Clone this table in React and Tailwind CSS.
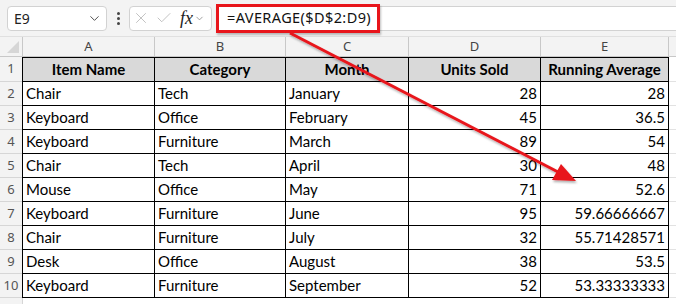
import { ChevronDown, X, Check } from 'lucide-react'

const columns = [
  { id: 'A', w: 'w-[132px]', first: true },
  { id: 'B', w: 'w-[131px]' },
  { id: 'C', w: 'w-[123px]' },
  { id: 'D', w: 'w-[132px]' },
  { id: 'E', w: 'w-[128px]' }
]

const headers = ['Item Name', 'Category', 'Month', 'Units Sold', 'Running Average']

const rows = [
  ['Chair', 'Tech', 'January', '28', '28'],
  ['Keyboard', 'Office', 'February', '45', '36.5'],
  ['Keyboard', 'Furniture', 'March', '89', '54'],
  ['Chair', 'Tech', 'April', '30', '48'],
  ['Mouse', 'Office', 'May', '71', '52.6'],
  ['Keyboard', 'Furniture', 'June', '95', '59.66666667'],
  ['Chair', 'Furniture', 'July', '32', '55.71428571'],
  ['Desk', 'Office', 'August', '38', '53.5'],
  ['Keyboard', 'Furniture', 'September', '52', '53.33333333']
]

function RowHead({ n, h }) {
  return (
    <div className={`w-[23px] ${h} shrink-0 flex items-center justify-center bg-[#f3f3f3] border-r border-b border-[#d6d6d6] text-[13px] text-[#555] font-['Noto_Sans',sans-serif]`}>
      {n}
    </div>
  )
}

export default function App() {
  return (
    <div className="relative w-[676px] h-[304px] overflow-hidden bg-white font-['Lato',sans-serif] text-black">
      {/* Toolbar */}
      <div className="h-[36px] bg-[#f3f3f3] flex items-center pl-[7px]">
        <div className="w-[100px] h-[25px] bg-white border border-[#d2d2d2] rounded-[4px] flex items-center justify-between pl-[6px] pr-[4px]">
          <span className="text-[14px] font-['Noto_Sans',sans-serif] text-[#222]">E9</span>
          <ChevronDown size={15} strokeWidth={1.5} className="text-[#444]" />
        </div>
        <div className="w-[22px] flex flex-col items-center gap-[2px]">
          <span className="w-[3px] h-[3px] bg-[#444] rounded-full" />
          <span className="w-[3px] h-[3px] bg-[#444] rounded-full" />
          <span className="w-[3px] h-[3px] bg-[#444] rounded-full" />
        </div>
        <div className="w-[83px] h-[25px] bg-white border border-[#d2d2d2] rounded-[4px] flex items-center pl-[2px] gap-[5px]">
          <X size={18} strokeWidth={1.1} className="text-[#b5b5b5]" />
          <Check size={18} strokeWidth={1.1} className="text-[#b5b5b5]" />
          <span className="flex items-center gap-[1px] ml-[2px]">
            <span className="text-[18px] italic font-['Liberation_Serif',serif] text-[#222] leading-none">fx</span>
            <ChevronDown size={11} strokeWidth={1.5} className="text-[#777]" />
          </span>
        </div>
        <div className="ml-[4px] flex-1 h-[25px] bg-white border-y border-[#d2d2d2] flex items-center">
          <div className="w-[164px] h-[29px] shrink-0 border-[3px] border-[#e8151b] bg-white flex items-center pl-[8px] shadow-[1px_2px_2px_rgba(0,0,0,0.25)]">
            <span className="text-[14.5px] font-['Noto_Sans',sans-serif] text-[#111] tracking-[0.4px]">=AVERAGE($D$2:D9)</span>
          </div>
        </div>
      </div>

      {/* Column headers */}
      <div className="flex h-[21px] bg-[#f3f3f3] border-t border-[#e0e0e0]">
        <div className="w-[23px] shrink-0 border-r border-b border-[#c8c8c8] relative">
          <svg width="12" height="12" className="absolute right-[3px] bottom-[3px]">
            <polygon points="12,0 12,12 0,12" fill="#d6d6d6" />
          </svg>
        </div>
        {columns.map((c) => (
          <div key={c.id} className={`${c.w} shrink-0 flex items-center justify-center border-r border-b border-[#c8c8c8] text-[13px] text-[#444] font-['Noto_Sans',sans-serif]`}>
            {c.id}
          </div>
        ))}
        <div className="flex-1 border-b border-[#c8c8c8]" />
      </div>

      {/* Row 1 header */}
      <div className="flex">
        <RowHead n={1} h="h-[25px]" />
        {headers.map((t, i) => (
          <div key={t} className={`${columns[i].w} h-[25px] shrink-0 bg-[#d9d9d9] border-t border-r border-b border-black ${i === 0 ? 'border-l -ml-px w-[133px]' : ''} flex items-center justify-center font-bold text-[15px]`}>
            {t}
          </div>
        ))}
        <div className="flex-1 border-b border-[#e2e2e2]" />
      </div>

      {/* Data rows */}
      {rows.map((r, ri) => (
        <div key={ri} className="flex">
          <RowHead n={ri + 2} h="h-[24px]" />
          {r.map((v, ci) => (
            <div
              key={ci}
              className={`${columns[ci].w} h-[24px] shrink-0 border-r border-b border-black ${ci === 0 ? 'border-l -ml-px w-[133px]' : ''} flex px-[3px] text-[15px] ${ci >= 3 ? 'justify-end' : ''} ${ci === 2 ? 'items-end pb-[1px]' : 'items-center'}`}
            >
              {v}
            </div>
          ))}
          <div className="flex-1 border-b border-[#e2e2e2]" />
        </div>
      ))}
      <div className="flex">
        <RowHead n="" h="h-[24px]" />
        <div className="flex-1" />
      </div>

      {/* Annotation arrow */}
      <svg className="absolute inset-0 pointer-events-none" width="676" height="304">
        <defs>
          <filter id="sh" x="-10%" y="-10%" width="120%" height="120%">
            <feDropShadow dx="1" dy="2" stdDeviation="1.2" floodColor="#000" floodOpacity="0.3" />
          </filter>
        </defs>
        <g filter="url(#sh)">
          <line x1="290" y1="33" x2="560" y2="173" stroke="#e8151b" strokeWidth="3" />
          <polygon points="576,181 552,180 561,164" fill="#e8151b" />
        </g>
      </svg>
    </div>
  )
}
